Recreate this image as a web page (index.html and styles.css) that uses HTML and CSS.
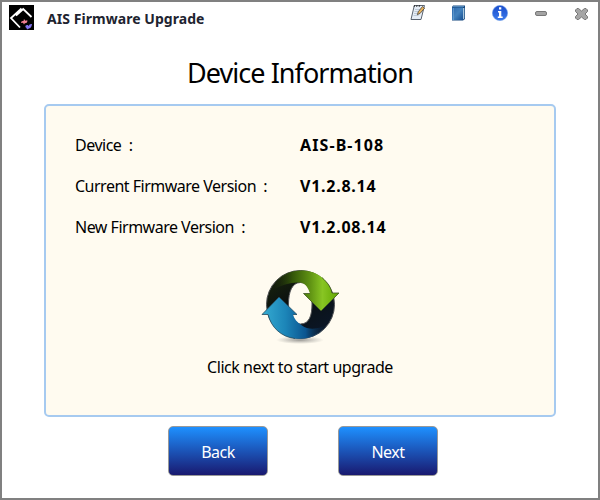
FILE: index.html
```html
<!DOCTYPE html>
<html lang="en">
<head>
<meta charset="utf-8">
<title>AIS Firmware Upgrade</title>
<link rel="stylesheet" href="styles.css">
</head>
<body>
<div class="window">
  <header class="titlebar">
    <svg class="logo" viewBox="0 0 25 25">
      <rect width="25" height="25"/>
      <path d="M12.500 3.500 2 13 11 22.500M22.500 12 14.200 4 7 10.700" fill="none" stroke="#fff" stroke-width="1.8"/>
      <path d="M12 18q0-2.500 2.500-2l.5-2 1.300 1.700 2-.5q.5 3-2.500 3l-.8 1.300-1-1.700z" fill="#f07f91"/>
      <path d="M16.300 22q0-2.500 2.500-2l.7 1q1-2.500 3.500-2-.5 4-3 4.500l-2 1-.5-1.500z" fill="#8172ef"/>
    </svg>
    <span class="app-name">AIS Firmware Upgrade</span>
    <nav class="tools">
      <svg width="16" height="17" viewBox="0 0 16 17">
        <path d="M4.300 1.500h10.200L11 15.500H1z" fill="#e6edf6" stroke="#5b6470"/>
        <path d="M4.500 1.200 4.200 2.800M7 1.200 6.700 2.800M9.500 1.200 9.200 2.800" stroke="#222"/>
        <path d="M5 5.500h5M4.500 7.500h4M4 9.500h3M3.500 11.500h5" stroke="#b4c1d2" stroke-width=".8"/>
        <path d="m7.300 10.700 1-3 4.200-5.200 2 1.700-4.300 5.100z" fill="#e8b45d" stroke="#4b4338" stroke-width=".8"/>
      </svg>
      <svg width="15" height="16" viewBox="0 0 15 16">
        <defs><linearGradient id="book" x2="1" y2="1"><stop stop-color="#2e69ad"/><stop offset=".5" stop-color="#4382bd"/><stop offset="1" stop-color="#174f91"/></linearGradient></defs>
        <path d="M2 .5h12V14l-2 1.500H1V2z" fill="#17497f"/>
        <path d="M12 3h1.300v10.500L12 14.500z" fill="#a9c8df"/>
        <path d="M1 2.500h11V15H1z" fill="url(#book)"/>
        <path d="M2.500 3v12M2 1.500h11" stroke="#6ca2d2" stroke-width=".7"/>
      </svg>
      <svg width="16" height="16" viewBox="0 0 16 16">
        <defs><linearGradient id="info" x2="0" y2="1"><stop stop-color="#194ccb"/><stop offset="1" stop-color="#3b7bec"/></linearGradient></defs>
        <circle cx="8" cy="8" r="7.600" fill="url(#info)" stroke="#6a98e5" stroke-width=".6"/>
        <path d="M7 2.300h2.300v2.200H7zM6 6h3.300v5.500h1.400V13H5.800v-1.500H7v-4H6z" fill="#fff"/>
      </svg>
      <svg class="minimize" width="12" height="5" viewBox="0 0 12 5">
        <rect x=".5" y=".5" width="11" height="4" rx="1.500" fill="#a4a4a4" stroke="#777"/>
      </svg>
      <svg class="close" width="13" height="12" viewBox="0 0 13 12">
        <path d="M2 .5h1.500l3 2.500 3-2.500H11L12.500 2v1.500L10 6l2.500 2.500V10L11 11.500H9.500L6.500 9l-3 2.500H2L.5 10V8.500L3 6 .5 3.500V2z" fill="#a6a6a6" stroke="#777"/>
      </svg>
    </nav>
  </header>
  <h1 class="heading">Device Information</h1>
  <main class="panel">
    <dl class="info">
      <dt>Device&nbsp; :</dt><dd class="model">AIS-B-108</dd>
      <dt>Current Firmware Version&nbsp; :</dt><dd>V1.2.8.14</dd>
      <dt>New Firmware Version&nbsp; :</dt><dd>V1.2.08.14</dd>
    </dl>
    <svg class="sync" viewBox="0 0 80 80">
      <defs>
        <linearGradient id="green" x1="0" x2="1"><stop stop-color="#1c290a" stop-opacity="0"/><stop offset=".3" stop-color="#345709"/><stop offset=".55" stop-color="#5d8f12"/><stop offset=".75" stop-color="#88c523"/><stop offset="1" stop-color="#61a500"/></linearGradient>
        <linearGradient id="blue"><stop stop-color="#36acd2"/><stop offset=".35" stop-color="#1c85b8"/><stop offset=".65" stop-color="#0b5590"/><stop offset="1" stop-color="#0c172a" stop-opacity="0"/></linearGradient>
        <linearGradient id="ring" x2=".6" y2="1"><stop stop-color="#1c290a"/><stop offset=".5" stop-color="#0b1010"/><stop offset="1" stop-color="#0b1626"/></linearGradient>
        <radialGradient id="shade"><stop stop-color="#555" stop-opacity=".6"/><stop offset="1" stop-color="#777" stop-opacity="0"/></radialGradient>
      </defs>
      <ellipse cx="39" cy="71" rx="24" ry="4" fill="url(#shade)"/>
      <path d="M39.500 1.500a34 34 0 1 1 0 68a34 34 0 1 1 0-68zM39.500 13.500C31 13.500 27.500 23 27.500 35s3 20 12 20 11.500-9 11.500-20-3-21.500-11.500-21.500z" fill="url(#ring)" fill-rule="evenodd" stroke="#4e5053"/>
      <path d="M14 13C27-2 50-1 61 8.500c6 5.500 9 10 10 15.500h7L60 42 42.500 24.500H49C46 15 42 13 36 13.500q-10 0-24 7z" fill="url(#green)"/>
      <path d="M61 8.500c6 5.500 9 10 10 15.500h7L60 42 42.500 24.500H49" fill="none" stroke="#3c5621" stroke-width=".8"/>
      <path d="M18 28 1 45.500h6C10 58 20 68 34 69.500c15 1.500 27-4 34-15-10 6-20 7-27 2-5-3-8-7-9-11h4z" fill="url(#blue)"/>
      <path d="M34 69.500C20 68 10 58 7 45.500H1L18 28l18 17.500h-4" fill="none" stroke="#254a5e" stroke-width=".8"/>
    </svg>
    <p class="hint">Click next to start upgrade</p>
  </main>
  <footer class="actions">
    <button class="btn">Back</button>
    <button class="btn">Next</button>
  </footer>
</div>
</body>
</html>
```
FILE: styles.css
```css
* { box-sizing: border-box; margin: 0; padding: 0; }
body { width: 600px; height: 500px; font: 16px/20px "Noto Sans", sans-serif; color: #000; }
.window { height: 500px; border: 2px solid #808080; background: #fff; display: flex; flex-direction: column; }
svg { display: block; flex: none; }
.titlebar { height: 50px; display: flex; align-items: flex-start; padding: 3px 8px 0 7px; }
.logo { width: 25px; height: 25px; }
.app-name { margin: 4px 0 0 13px; font-size: 14px; font-weight: bold; color: #1e2430; white-space: nowrap; letter-spacing: .05px; }
.tools { margin: -1px -12px 0 auto; height: 16px; display: grid; grid-template-columns: repeat(5, 41px); align-items: center; justify-items: center; }
.minimize, .close { margin-top: 2px; }
.heading { height: 52px; padding-top: 2px; text-align: center; font-size: 27px; line-height: 38px; font-weight: normal; white-space: nowrap; letter-spacing: -.95px; }
.panel { margin: 0 42px; height: 313px; border: 2px solid #a6caf0; border-radius: 5px; background: #fffbf0; display: flex; flex-direction: column; align-items: center; padding-top: 18px; }
.info { width: 508px; padding-left: 29px; display: grid; grid-template-columns: 225px 1fr; grid-auto-rows: 41px; align-items: center; white-space: nowrap; }
dt { letter-spacing: -.5px; }
dd { font-weight: bold; letter-spacing: .75px; }
.model { letter-spacing: 1.1px; }
.sync { width: 80px; height: 80px; margin: 22px 0 0 2px; }
.hint { margin-top: 8px; letter-spacing: -.45px; white-space: nowrap; }
.actions { margin-top: 9px; display: flex; gap: 70px; padding-left: 166px; }
.btn { width: 100px; height: 50px; padding-top: 2px; border: 1px solid #999; border-radius: 5px; background: linear-gradient(#1e90ff, #191970); color: #fff; font: 16px/20px "Noto Sans", sans-serif; letter-spacing: -.5px; }
```
